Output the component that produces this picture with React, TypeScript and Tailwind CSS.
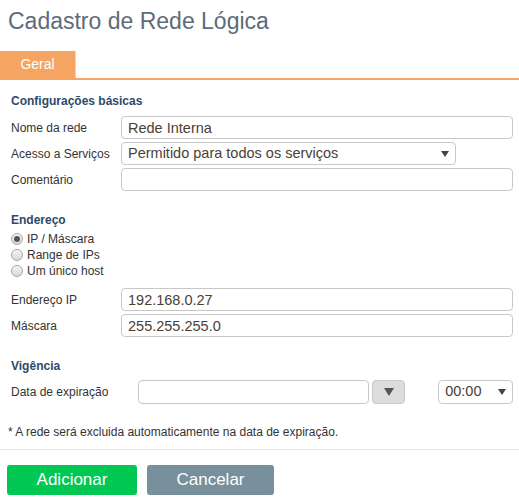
import { useState } from "react";

const label = "text-[12px] text-[#333]";
const input =
  "h-[23px] rounded-[4px] border border-[#c8c8c8] bg-white px-[6px] text-[14.5px] text-[#4b4036] outline-none";

function Row({ title, children }: { title: string; children: React.ReactNode }) {
  return (
    <div className="flex items-center">
      <span className={`${label} w-[110px] shrink-0`}>{title}</span>
      {children}
    </div>
  );
}

function Caret() {
  return (
    <svg width="8" height="6" viewBox="0 0 8 6">
      <path d="M0 0h8L4 6z" fill="#444" />
    </svg>
  );
}

export default function App() {
  const [mode, setMode] = useState("ip");
  const radios = [
    { id: "ip", text: "IP / Máscara" },
    { id: "range", text: "Range de IPs" },
    { id: "host", text: "Um único host" },
  ];

  return (
    <div className="w-[519px] h-[503px] bg-white font-['Liberation_Sans',Arial,sans-serif] overflow-hidden">
      <h1 className="pl-[8px] pt-[7px] text-[23px] leading-[28px] text-[#5d6b7a]">Cadastro de Rede Lógica</h1>

      <div className="mt-[16px] flex border-b-2 border-[#f5a462]">
        <div className="w-[76px] h-[27px] bg-[#f5a462] border-r border-[#d8d8d8] flex items-center justify-center text-[14px] text-white">
          Geral
        </div>
      </div>

      <div className="px-[11px] pr-[6px]">
        <h2 className="mt-[12px] text-[12px] font-bold text-[#2e4a68]">Configurações básicas</h2>
        <div className="mt-[6px] flex flex-col gap-[3px]">
          <Row title="Nome da rede">
            <input className={`${input} flex-1`} defaultValue="Rede Interna" />
          </Row>
          <Row title="Acesso a Serviços">
            <div className={`${input} w-[335px] flex items-center justify-between`}>
              <span>Permitido para todos os serviços</span>
              <Caret />
            </div>
          </Row>
          <Row title="Comentário">
            <input className={`${input} flex-1`} />
          </Row>
        </div>

        <h2 className="mt-[20px] text-[12px] font-bold text-[#2e4a68]">Endereço</h2>
        <div className="mt-[2px] flex flex-col">
          {radios.map((r) => (
            <label key={r.id} className="flex items-center gap-[4px] h-[16px] text-[12px] text-[#333]">
              <span className="w-[12px] h-[12px] rounded-full border border-[#a8a8a8] bg-gradient-to-b from-[#f6f6f6] to-[#d8d8d8] flex items-center justify-center">
                {mode === r.id && <span className="w-[6px] h-[6px] rounded-full bg-[#555]" />}
              </span>
              <input type="radio" className="hidden" checked={mode === r.id} onChange={() => setMode(r.id)} />
              {r.text}
            </label>
          ))}
        </div>

        <div className="mt-[9px] flex flex-col gap-[3px]">
          <Row title="Endereço IP">
            <input className={`${input} flex-1`} defaultValue="192.168.0.27" />
          </Row>
          <Row title="Máscara">
            <input className={`${input} flex-1`} defaultValue="255.255.255.0" />
          </Row>
        </div>

        <h2 className="mt-[20px] text-[12px] font-bold text-[#2e4a68]">Vigência</h2>
        <div className="mt-[5px] flex items-center">
          <span className={`${label} w-[127px] shrink-0`}>Data de expiração</span>
          <input className={`${input} w-[232px] h-[24px]`} />
          <button className="ml-[3px] w-[33px] h-[24px] rounded-[4px] border border-[#c8c8c8] bg-[#dcdcdc] flex items-center justify-center">
            <svg width="10" height="8" viewBox="0 0 10 8">
              <path d="M0 0h10L5 8z" fill="#555" />
            </svg>
          </button>
          <div className={`${input} ml-[33px] w-[75px] h-[24px] flex items-center justify-between`}>
            <span>00:00</span>
            <Caret />
          </div>
        </div>

        <p className="mt-[19px] text-[12px] text-[#333] -ml-[3px]">* A rede será excluida automaticamente na data de expiração.</p>
      </div>

      <div className="mt-[8px] border-t border-[#f8dcc6] px-[7px] pt-[15px] flex gap-[10px]">
        <button className="w-[130px] h-[30px] rounded-[3px] bg-[#00c853] text-white text-[17px]">Adicionar</button>
        <button className="w-[127px] h-[30px] rounded-[3px] bg-[#78909c] text-white text-[17px]">Cancelar</button>
      </div>
    </div>
  );
}
